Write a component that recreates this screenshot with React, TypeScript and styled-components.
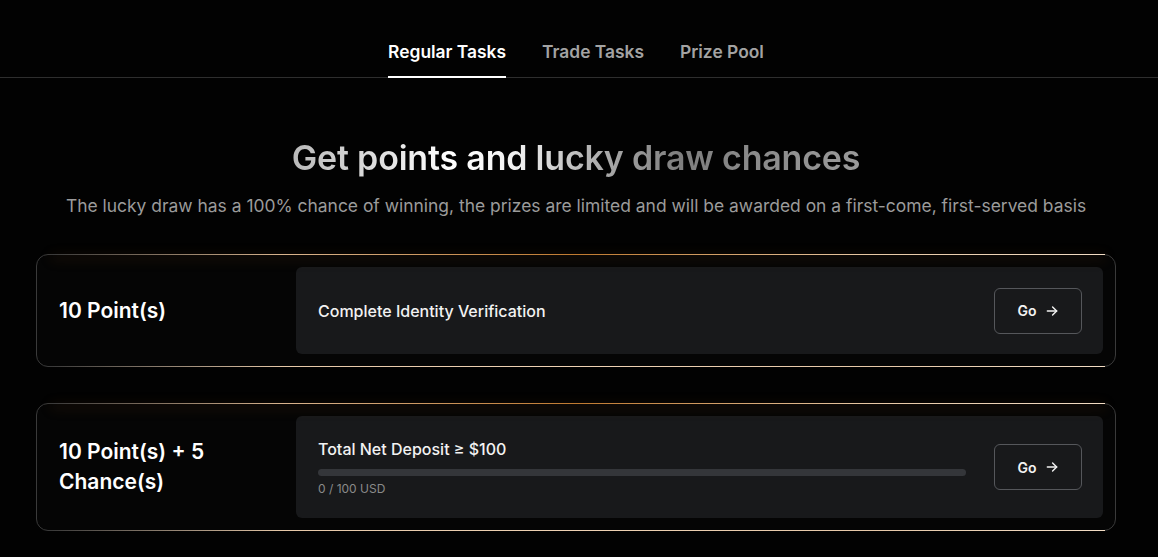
import * as React from 'react';
import styled, { createGlobalStyle } from 'styled-components';

const GlobalStyle = createGlobalStyle`
    html, body {
        margin: 0;
        padding: 0;
        background: #020202;
        font-family: Inter, "Noto Sans", sans-serif;
        color: #fff;
    }
`;

const Page = styled.div`
    width: 1158px;
    min-height: 557px;
    background: #020202;
    overflow: hidden;
`;

const TabBar = styled.div`
    display: flex;
    justify-content: center;
    gap: 36px;
    height: 78px;
    padding-right: 6px;
    border-bottom: 1px solid #2e2e2e;
    box-sizing: border-box;
`;

const Tab = styled.div<{ $active?: boolean }>`
    padding-top: 40px;
    font-size: 17.4px;
    font-weight: 600;
    line-height: 24px;
    color: ${p => (p.$active ? '#fff' : '#a3a3a3')};
    border-bottom: 2px solid ${p => (p.$active ? '#fff' : 'transparent')};
    margin-bottom: -1px;
`;

const Hero = styled.div`
    display: flex;
    flex-direction: column;
    align-items: center;
    padding: 58px 6px 0 0;
`;

const Heading = styled.h1`
    margin: 0;
    font-size: 34px;
    font-weight: 600;
    line-height: 44px;
    letter-spacing: -0.2px;
    background: linear-gradient(90deg, #b9b9b9 0%, #ffffff 28%, #f0f0f0 40%, #b5b5b5 52%, #7e7e7e 68%, #9a9a9a 100%);
    -webkit-background-clip: text;
    background-clip: text;
    color: transparent;
`;

const Subtitle = styled.p`
    margin: 14px 0 0;
    font-size: 17.45px;
    line-height: 24px;
    color: #9b9b9b;
`;

const TaskList = styled.div`
    display: flex;
    flex-direction: column;
    gap: 36px;
    padding: 36px 42px 0 36px;
`;

const TaskCard = styled.div`
    position: relative;
    display: flex;
    padding: 12px;
    border: 1px solid #3a3a3a;
    border-radius: 12px;
    background: #050505;

    &::before,
    &::after {
        content: '';
        position: absolute;
        left: 14px;
        right: 10px;
        height: 1px;
    }

    &::before {
        top: -1px;
        background: linear-gradient(90deg, rgba(255, 255, 255, 0) 0%, #d9b48e 22%, #c07a30 50%, #e8c9a6 78%, #f2dcc4 100%);
        box-shadow: 0 3px 12px rgba(210, 120, 40, 0.55);
    }

    &::after {
        bottom: -1px;
        background: linear-gradient(90deg, rgba(255, 255, 255, 0) 0%, #e6c8a8 22%, #efd2b4 50%, #e6c8a8 78%, #f2dcc4 100%);
    }
`;

const Reward = styled.div`
    width: 247px;
    flex-shrink: 0;
    display: flex;
    align-items: center;
    padding-left: 10px;
    box-sizing: border-box;
    font-size: 21px;
    font-weight: 600;
    line-height: 30px;
`;

const TaskBody = styled.div<{ $tall?: boolean }>`
    flex: 1;
    display: flex;
    align-items: center;
    gap: 28px;
    min-height: ${p => (p.$tall ? 102 : 87)}px;
    padding: 0 21px 0 22px;
    background: #18191b;
    border-radius: 6px;
`;

const TaskInfo = styled.div`
    flex: 1;
    display: flex;
    flex-direction: column;
`;

const TaskTitle = styled.div`
    font-size: 16px;
    font-weight: 500;
    color: #f2f2f2;
    line-height: 22px;
`;

const Progress = styled.div`
    height: 7px;
    margin-top: 9px;
    border-radius: 4px;
    background: #34363a;
    overflow: hidden;
`;

const ProgressFill = styled.div`
    height: 100%;
    background: #d69b5c;
`;

const ProgressText = styled.div`
    margin-top: 5px;
    font-size: 12px;
    color: #8a8a8a;
    line-height: 16px;
`;

const GoButton = styled.button`
    display: flex;
    align-items: center;
    justify-content: center;
    gap: 8px;
    width: 88px;
    height: 46px;
    background: transparent;
    border: 1px solid #55575b;
    border-radius: 6px;
    color: #f2f2f2;
    font-family: inherit;
    font-size: 14px;
    font-weight: 600;
    cursor: pointer;
`;

const Arrow = () => (
    <svg width="14" height="14" viewBox="0 0 24 24" fill="none" stroke="currentColor" strokeWidth="2.4" strokeLinecap="round" strokeLinejoin="round">
        <path d="M4 12h16" />
        <path d="M13 5l7 7-7 7" />
    </svg>
);

interface Task {
    reward: string;
    title: string;
    progress?: { current: number; target: number; unit: string };
}

const tasks: Task[] = [
    { reward: '10 Point(s)', title: 'Complete Identity Verification' },
    {
        reward: '10 Point(s) + 5 Chance(s)',
        title: 'Total Net Deposit ≥ $100',
        progress: { current: 0, target: 100, unit: 'USD' },
    },
];

export default function App() {
    return (
        <Page>
            <GlobalStyle />
            <TabBar>
                <Tab $active>Regular Tasks</Tab>
                <Tab>Trade Tasks</Tab>
                <Tab>Prize Pool</Tab>
            </TabBar>
            <Hero>
                <Heading>Get points and lucky draw chances</Heading>
                <Subtitle>
                    The lucky draw has a 100% chance of winning, the prizes are limited and will be awarded on a first-come, first-served basis
                </Subtitle>
            </Hero>
            <TaskList>
                {tasks.map(task => (
                    <TaskCard key={task.title}>
                        <Reward>{task.reward}</Reward>
                        <TaskBody $tall={!!task.progress}>
                            <TaskInfo>
                                <TaskTitle>{task.title}</TaskTitle>
                                {task.progress && (
                                    <>
                                        <Progress>
                                            <ProgressFill
                                                style={{ width: `${(task.progress.current / task.progress.target) * 100}%` }}
                                            />
                                        </Progress>
                                        <ProgressText>
                                            {task.progress.current} / {task.progress.target} {task.progress.unit}
                                        </ProgressText>
                                    </>
                                )}
                            </TaskInfo>
                            <GoButton>
                                Go <Arrow />
                            </GoButton>
                        </TaskBody>
                    </TaskCard>
                ))}
            </TaskList>
        </Page>
    );
}
